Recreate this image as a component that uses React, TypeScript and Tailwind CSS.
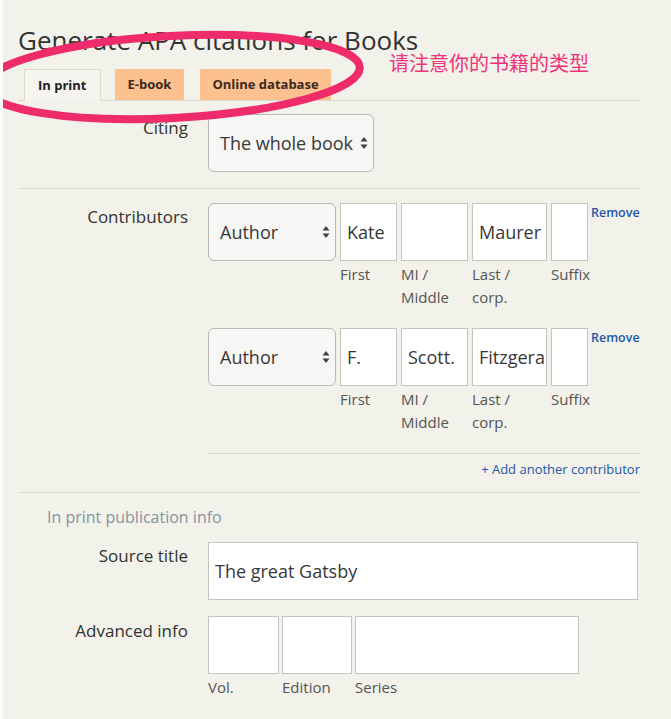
import React from 'react';

function Arrows() {
  return (
    <svg width="8" height="14" viewBox="0 0 8 14" className="shrink-0">
      <path d="M4 1 L7.5 5.5 H0.5 Z" fill="#3f3f3f" />
      <path d="M4 13 L7.5 8.5 H0.5 Z" fill="#3f3f3f" />
    </svg>
  );
}

function Select({ value, width }: { value: string; width: string }) {
  return (
    <div
      className={`${width} h-[58px] shrink-0 flex items-center justify-between rounded-[6px] border border-[#b9b9b6] bg-[#f6f6f4] pl-[11px] pr-[5px] text-[18px] text-[#383838]`}
    >
      <span className="whitespace-nowrap">{value}</span>
      <Arrows />
    </div>
  );
}

function Box({ value, width }: { value?: string; width: string }) {
  return (
    <div
      className={`${width} h-[58px] shrink-0 flex items-center overflow-hidden whitespace-nowrap border border-[#c4c4c0] bg-white px-[6px] text-[18px] text-[#383838]`}
    >
      {value}
    </div>
  );
}

function Field({ value, label, width }: { value?: string; label: string; width: string }) {
  return (
    <div className={`${width} shrink-0`}>
      <Box value={value} width="w-full" />
      <div className="mt-[2px] text-[15px] leading-[23px] text-[#555]">{label}</div>
    </div>
  );
}

function ContributorRow({ first, middle, last }: { first: string; middle: string; last: string }) {
  return (
    <div className="flex items-start gap-[4px]">
      <Select value="Author" width="w-[128px]" />
      <Field value={first} label="First" width="w-[57px]" />
      <Field value={middle} label="MI / Middle" width="w-[67px]" />
      <Field value={last} label="Last / corp." width="w-[75px]" />
      <Field label="Suffix" width="w-[37px]" />
      <a className="-ml-[1px] mt-[1px] text-[12.5px] font-semibold text-[#1f58a5]">Remove</a>
    </div>
  );
}

export default function App() {
  return (
    <div className="relative min-h-screen overflow-hidden border-l-[3px] border-l-[#fbfbf8] bg-[#f2f1ea] font-['Open_Sans','Noto_Sans_CJK_SC',sans-serif] text-[#333]">
      <div className="pl-[15px] pr-[31px] pt-[22px] pb-[20px]">
        <h1 className="text-[26px] leading-[36px] text-[#333]">Generate APA citations for Books</h1>

        {/* tabs */}
        <div className="mt-[11px] flex items-end border-b border-[#dcd9d1] pl-[6px]">
          <div className="-mb-px flex h-[32px] items-center border border-b-0 border-[#dcd9d1] bg-[#f5f4ef] px-[13px] text-[13px] font-bold text-[#222]">
            In print
          </div>
          <div className="ml-[14px] flex h-[31px] items-center bg-[#fdc08f] px-[13px] text-[13px] font-bold text-[#3a2a1e]">
            E-book
          </div>
          <div className="ml-[16px] flex h-[31px] items-center bg-[#fdc08f] px-[12px] text-[13px] font-bold text-[#3a2a1e]">
            Online database
          </div>
        </div>

        {/* citing */}
        <div className="grid grid-cols-[170px_1fr] gap-x-[20px] border-b border-[#dcd9d1] pt-[13px] pb-[16px]">
          <div className="pt-[2px] text-right text-[17px] leading-[24px]">Citing</div>
          <div>
            <Select value="The whole book" width="w-[166px]" />
          </div>
        </div>

        {/* contributors */}
        <div className="grid grid-cols-[170px_1fr] gap-x-[20px] border-b border-[#dcd9d1] pt-[14px]">
          <div className="pt-[2px] text-right text-[17px] leading-[24px]">Contributors</div>
          <div>
            <ContributorRow first="Kate" middle="" last="Maurer" />
            <div className="mt-[19px]">
              <ContributorRow first="F." middle="Scott." last="Fitzgerald" />
            </div>
            <div className="mt-[19px] border-t border-[#dcd9d1] pt-[6px] pb-[14px] text-right text-[13px] leading-[18px] text-[#1f58a5]">
              + Add another contributor
            </div>
          </div>
        </div>

        {/* publication info */}
        <div className="pl-[29px] pt-[12px] text-[16px] leading-[24px] text-[#8794a2]">In print publication info</div>

        <div className="mt-[13px] grid grid-cols-[170px_1fr] gap-x-[20px]">
          <div className="pt-[2px] text-right text-[17px] leading-[24px]">Source title</div>
          <div>
            <Box value="The great Gatsby" width="w-[430px]" />
          </div>
        </div>

        <div className="mt-[16px] grid grid-cols-[170px_1fr] gap-x-[20px]">
          <div className="pt-[3px] text-right text-[17px] leading-[24px]">Advanced info</div>
          <div className="flex gap-[3px]">
            <Field label="Vol." width="w-[71px]" />
            <Field label="Edition" width="w-[70px]" />
            <Field label="Series" width="w-[224px]" />
          </div>
        </div>
      </div>

      {/* annotation overlay */}
      <svg className="pointer-events-none absolute left-0 top-0" width="671" height="140" viewBox="0 0 671 140">
        <ellipse cx="169" cy="77" rx="188" ry="41" transform="rotate(-3 169 77)" fill="none" stroke="#ee2c6c" strokeWidth="8" />
      </svg>
      <div className="absolute left-[386px] top-[51px] text-[20px] leading-[26px] text-[#f0337a]">请注意你的书籍的类型</div>
    </div>
  );
}
